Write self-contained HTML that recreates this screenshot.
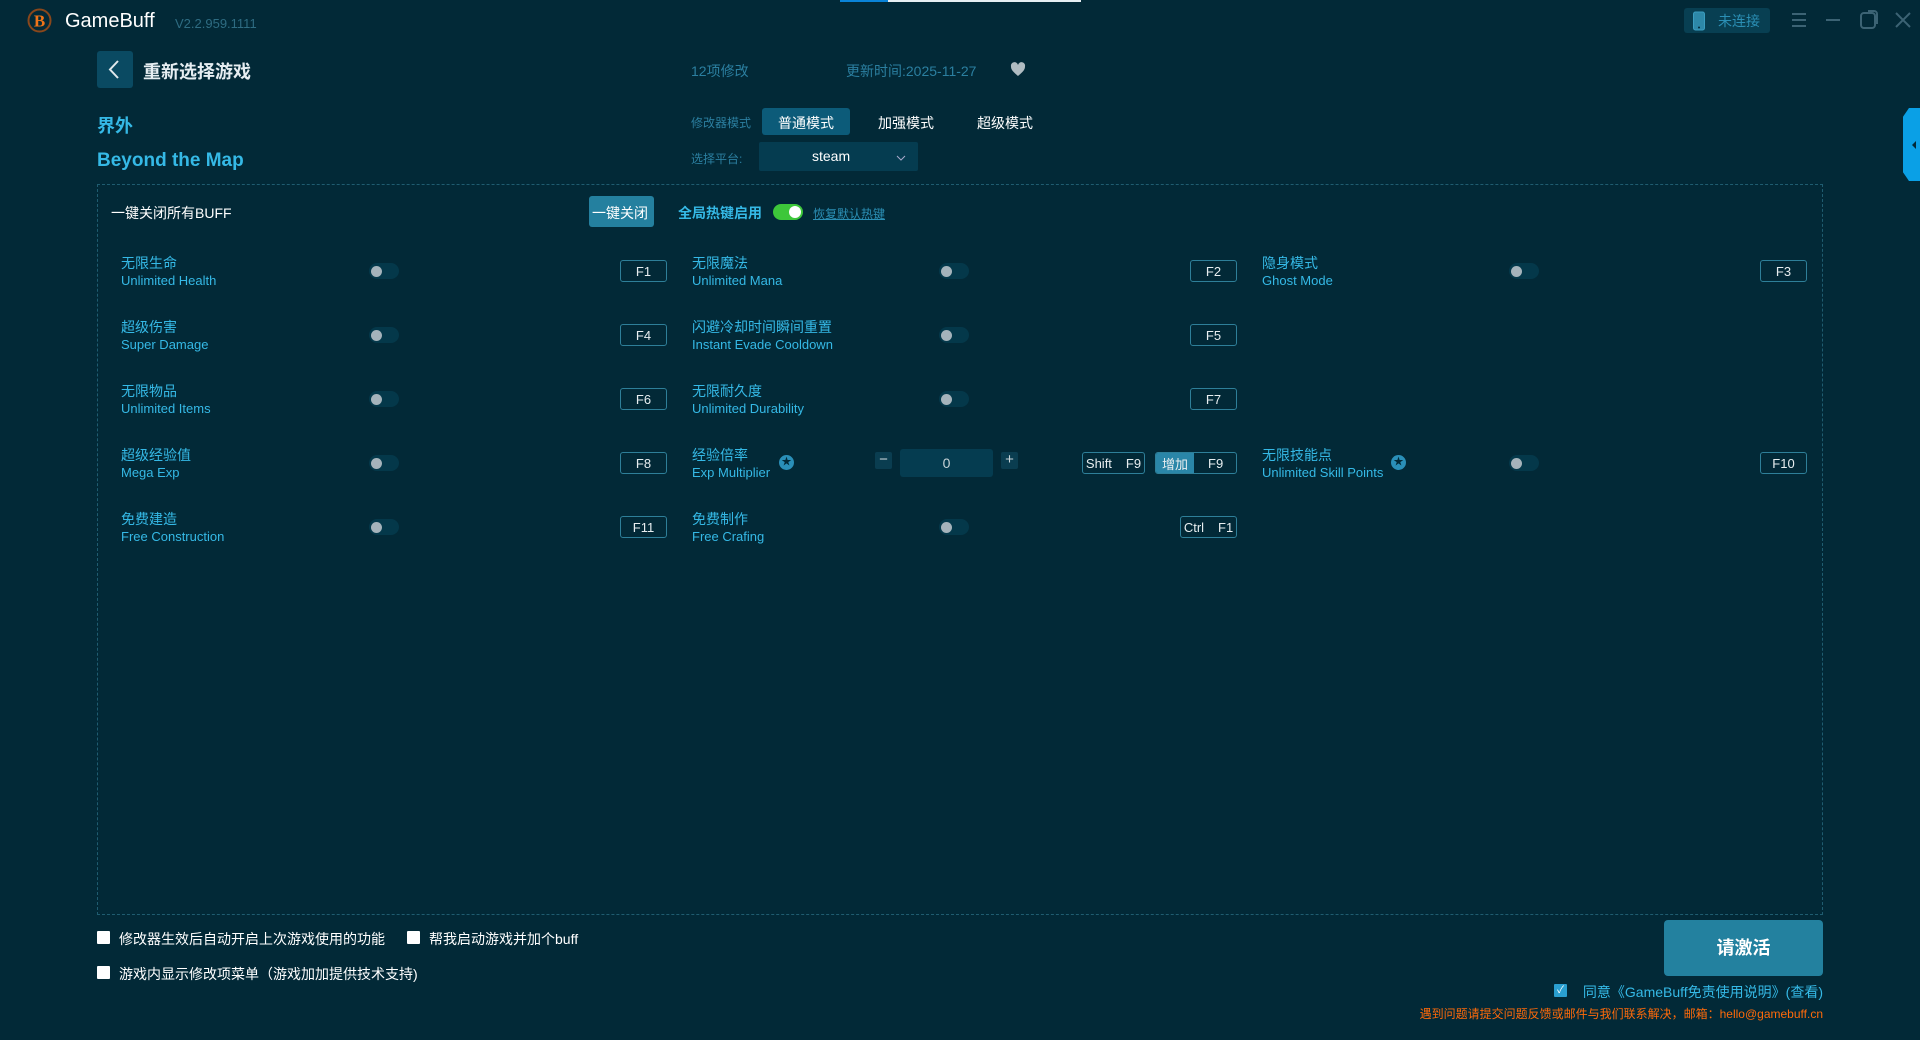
<!DOCTYPE html>
<html><head><meta charset="utf-8"><style>
*{margin:0;padding:0;box-sizing:border-box}
body{width:1920px;height:1040px;background:#022937;font-family:"Liberation Sans","Noto Sans CJK SC",sans-serif;position:relative;overflow:hidden;color:#fff}
.a{position:absolute;white-space:nowrap}
.cy{color:#35b9e6}
.dim{color:#2b7fa0}
.key{position:absolute;height:22px;border:1px solid #2e7f99;border-radius:3px;color:#e8eef0;font-size:13px;display:flex;align-items:center;justify-content:center}
.key i{font-style:normal;padding:0 7px}
.key b{width:1px;height:14px;background:#2e7f99}
.tg{position:absolute;width:30px;height:16px;border-radius:8px;background:#04384a}
.tg:after{content:"";position:absolute;left:2px;top:2.5px;width:11px;height:11px;border-radius:50%;background:#a5b3bb}
.n{position:absolute;font-size:14px;color:#35b9e6;line-height:17px}
.n span{display:block;font-size:13px}
.cb{position:absolute;width:13px;height:13px;background:#fff;border-radius:1px}
.bt{font-size:14px;color:#fff}
</style></head><body>
<div class="a" style="left:840px;top:0;width:48px;height:2px;background:#0a84d8"></div>
<div class="a" style="left:888px;top:0;width:193px;height:2px;background:#e6eef2"></div>
<svg class="a" style="left:26px;top:7px" width="27" height="27" viewBox="0 0 27 27"><circle cx="13.5" cy="13.5" r="11" fill="none" stroke="#c3540f" stroke-width="2" opacity=".7"/><text x="13.5" y="19.5" font-size="17" font-weight="bold" fill="#f07418" text-anchor="middle" font-family="Liberation Serif">B</text></svg>
<div class="a" style="left:65px;top:10px;font-size:20px;color:#fff">GameBuff</div>
<div class="a dim" style="left:175px;top:16px;font-size:13px;color:#2e6c82">V2.2.959.1111</div>
<div class="a" style="left:1684px;top:8px;width:86px;height:25px;background:#083f52;border-radius:3px"></div>
<svg class="a" style="left:1692px;top:11px" width="14" height="20"><rect x="1.5" y="1" width="11" height="18" rx="2" fill="#2d88a8" stroke="#3a9dc0"/><circle cx="7" cy="16.5" r="1" fill="#022937"/></svg>
<div class="a" style="left:1718px;top:11px;font-size:14px;color:#2b8fb5">未连接</div>
<svg class="a" style="left:1788px;top:10px" width="130" height="22" stroke="#3c6374" stroke-width="2" fill="none"><path d="M4 4h14M4 10h14M4 16h14"/><path d="M38 10h14"/><rect x="73" y="3" width="14" height="15" rx="3"/><path d="M80 1h6a3 3 0 0 1 3 3v10"/><path d="M108 3l14 14M122 3l-14 14"/></svg>
<div class="a" style="left:1903px;top:108px;width:17px;height:73px;background:#0aa0e6;clip-path:polygon(35% 0,100% 0,100% 100%,35% 100%,0 88%,0 12%)"></div>
<div class="a" style="left:1908px;top:141px;width:0;height:0;border:4px solid transparent;border-right:4px solid #022937"></div>

<div class="a" style="left:97px;top:51px;width:36px;height:37px;background:#0a4a62;border-radius:3px"></div>
<svg class="a" style="left:97px;top:51px" width="36" height="37"><path d="M21 10l-8 8.5 8 8.5" stroke="#e0e8ec" stroke-width="2" fill="none"/></svg>
<div class="a" style="left:143px;top:58px;font-size:18px;font-weight:bold;color:#e6eef2">重新选择游戏</div>
<div class="a dim" style="left:691px;top:61px;font-size:14px">12项修改</div>
<div class="a dim" style="left:846px;top:61px;font-size:14px">更新时间:2025-11-27</div>
<svg class="a" style="left:1010px;top:62px" width="16" height="15"><path d="M8 14C2 9 1 7 1 4.5A3.5 3.5 0 0 1 8 3a3.5 3.5 0 0 1 7 1.5C15 7 14 9 8 14z" fill="#b0bcc2"/></svg>

<div class="a cy" style="left:97px;top:112px;font-size:18px;font-weight:bold">界外</div>
<div class="a cy" style="left:97px;top:150px;font-size:19px;font-weight:bold">Beyond the Map</div>
<div class="a dim" style="left:691px;top:114px;font-size:12px">修改器模式</div>
<div class="a" style="left:762px;top:108px;width:88px;height:27px;background:#0c5b79;border-radius:3px"></div>
<div class="a" style="left:778px;top:113px;font-size:14px">普通模式</div>
<div class="a" style="left:878px;top:113px;font-size:14px">加强模式</div>
<div class="a" style="left:977px;top:113px;font-size:14px">超级模式</div>
<div class="a dim" style="left:691px;top:150px;font-size:12px">选择平台:</div>
<div class="a" style="left:759px;top:142px;width:159px;height:29px;background:#053c50;border-radius:2px"></div>
<div class="a" style="left:812px;top:148px;font-size:14px">steam</div>
<svg class="a" style="left:896px;top:155px" width="10" height="7"><path d="M1 1l4 4 4-4" stroke="#aac" fill="none"/></svg>

<div class="a" style="left:97px;top:184px;width:1726px;height:731px;border:1px dashed #1f5c70"></div>
<div class="a" style="left:111px;top:203px;font-size:14px">一键关闭所有BUFF</div>
<div class="a" style="left:589px;top:196px;width:65px;height:31px;background:#24809f;border-radius:3px"></div>
<div class="a" style="left:592px;top:203px;font-size:14px">一键关闭</div>
<div class="a cy" style="left:678px;top:203px;font-size:14px;font-weight:bold">全局热键启用</div>
<div class="a" style="left:773px;top:204px;width:30px;height:16px;border-radius:8px;background:#3dc73a"></div>
<div class="a" style="left:789px;top:206px;width:12px;height:12px;border-radius:50%;background:#fff"></div>
<div class="a" style="left:813px;top:205px;font-size:12px;color:#2b8fb5;text-decoration:underline">恢复默认热键</div>

<div class="n" style="left:121px;top:255px">无限生命<span>Unlimited Health</span></div><div class="tg" style="left:369px;top:263px"></div><div class="key" style="left:620px;top:260px;width:47px">F1</div>
<div class="n" style="left:692px;top:255px">无限魔法<span>Unlimited Mana</span></div><div class="tg" style="left:939px;top:263px"></div><div class="key" style="left:1190px;top:260px;width:47px">F2</div>
<div class="n" style="left:1262px;top:255px">隐身模式<span>Ghost Mode</span></div><div class="tg" style="left:1509px;top:263px"></div><div class="key" style="left:1760px;top:260px;width:47px">F3</div>

<div class="n" style="left:121px;top:319px">超级伤害<span>Super Damage</span></div><div class="tg" style="left:369px;top:327px"></div><div class="key" style="left:620px;top:324px;width:47px">F4</div>
<div class="n" style="left:692px;top:319px">闪避冷却时间瞬间重置<span>Instant Evade Cooldown</span></div><div class="tg" style="left:939px;top:327px"></div><div class="key" style="left:1190px;top:324px;width:47px">F5</div>

<div class="n" style="left:121px;top:383px">无限物品<span>Unlimited Items</span></div><div class="tg" style="left:369px;top:391px"></div><div class="key" style="left:620px;top:388px;width:47px">F6</div>
<div class="n" style="left:692px;top:383px">无限耐久度<span>Unlimited Durability</span></div><div class="tg" style="left:939px;top:391px"></div><div class="key" style="left:1190px;top:388px;width:47px">F7</div>

<div class="n" style="left:121px;top:447px">超级经验值<span>Mega Exp</span></div><div class="tg" style="left:369px;top:455px"></div><div class="key" style="left:620px;top:452px;width:47px">F8</div>
<div class="n" style="left:692px;top:447px">经验倍率<span>Exp Multiplier</span></div>
<div class="a" style="left:779px;top:455px;width:15px;height:15px;border-radius:50%;background:#2a8fb8;color:#022937;font-size:10px;text-align:center;line-height:15px">★</div>
<div class="a" style="left:875px;top:452px;width:17px;height:17px;background:#0a3d50;border-radius:2px;text-align:center;line-height:16px;color:#c8d4d8;font-size:15px">−</div>
<div class="a" style="left:900px;top:449px;width:93px;height:28px;background:#053c50;border-radius:3px;text-align:center;line-height:28px;font-size:14px;color:#c8d4d8">0</div>
<div class="a" style="left:1001px;top:452px;width:17px;height:17px;background:#0a3d50;border-radius:2px;text-align:center;line-height:16px;color:#c8d4d8;font-size:15px">+</div>
<div class="key" style="left:1082px;top:452px;width:63px"><i>Shift</i><b></b><i>F9</i></div>
<div class="key" style="left:1155px;top:452px;width:82px;justify-content:flex-start;overflow:hidden"><i style="background:#2a86a8;height:100%;display:flex;align-items:center;padding:0 6px">增加</i><i style="padding-left:14px">F9</i></div>
<div class="n" style="left:1262px;top:447px">无限技能点<span>Unlimited Skill Points</span></div>
<div class="a" style="left:1391px;top:455px;width:15px;height:15px;border-radius:50%;background:#2a8fb8;color:#022937;font-size:10px;text-align:center;line-height:15px">★</div>
<div class="tg" style="left:1509px;top:455px"></div><div class="key" style="left:1760px;top:452px;width:47px">F10</div>

<div class="n" style="left:121px;top:511px">免费建造<span>Free Construction</span></div><div class="tg" style="left:369px;top:519px"></div><div class="key" style="left:620px;top:516px;width:47px">F11</div>
<div class="n" style="left:692px;top:511px">免费制作<span>Free Crafing</span></div><div class="tg" style="left:939px;top:519px"></div><div class="key" style="left:1180px;top:516px;width:57px"><i>Ctrl</i><b></b><i>F1</i></div>

<div class="cb" style="left:97px;top:931px"></div><div class="a bt" style="left:119px;top:929px">修改器生效后自动开启上次游戏使用的功能</div>
<div class="cb" style="left:407px;top:931px"></div><div class="a bt" style="left:429px;top:929px">帮我启动游戏并加个buff</div>
<div class="cb" style="left:97px;top:966px"></div><div class="a bt" style="left:119px;top:964px">游戏内显示修改项菜单（游戏加加提供技术支持)</div>
<div class="a" style="left:1664px;top:920px;width:159px;height:56px;background:#23819f;border-radius:4px;text-align:center;line-height:56px;font-size:18px;font-weight:bold">请激活</div>
<div class="a" style="left:1554px;top:984px;width:13px;height:13px;background:#2a9fd0;border-radius:1px;font-size:10px;text-align:center;line-height:13px">✓</div>
<div class="a" style="right:97px;top:982px;font-size:14px;color:#35b9e6">同意《GameBuff免责使用说明》(查看)</div>
<div class="a" style="right:97px;top:1005px;font-size:12px;color:#ff6a0a">遇到问题请提交问题反馈或邮件与我们联系解决，邮箱：hello@gamebuff.cn</div>
</body></html>
